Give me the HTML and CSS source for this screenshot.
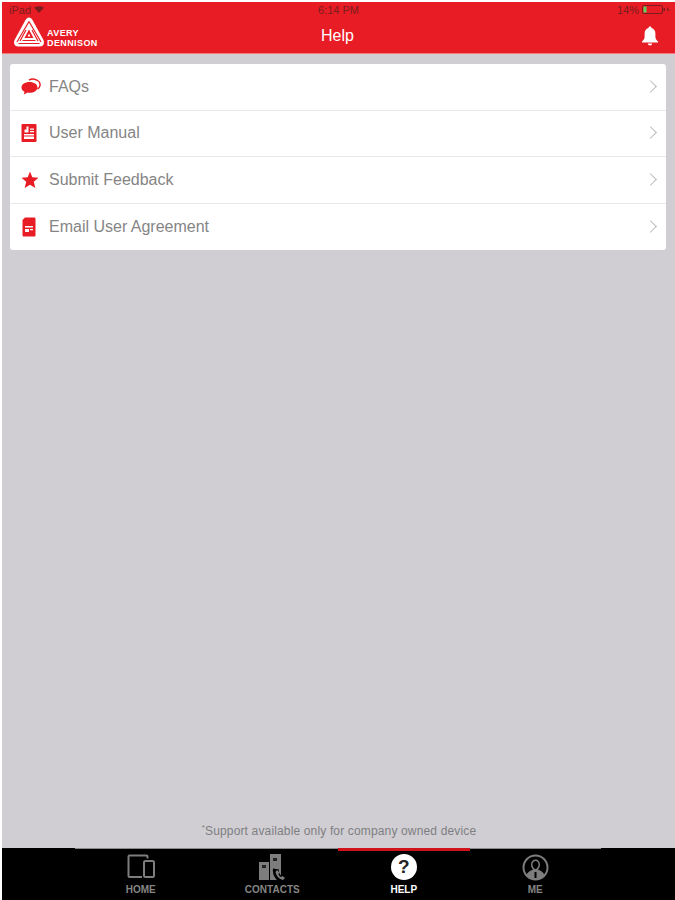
FILE: index.html
```html
<!DOCTYPE html>
<html lang="en">
<head>
    <meta charset="UTF-8">
    <meta name="viewport" content="width=device-width, initial-scale=1.0">
    <title>Help</title>
    <link rel="stylesheet" href="styles.css">
</head>
<body>
    <div class="app">
        <header class="header">
            <div class="status">
                <span class="status-left">iPad
                    <svg class="wifi" width="10" height="7" viewBox="0 0 10 7"><path d="M0 1.500Q5-1 10 1.500L5 7Z"/></svg>
                </span>
                <span class="status-time">6:14 PM</span>
                <span class="status-right">14%
                    <svg class="battery" width="28" height="9" viewBox="0 0 28 9">
                        <rect x="0.500" y="0.500" width="20" height="8" rx="1.500" fill="none" stroke="#7a1c20"/>
                        <rect x="1.500" y="1.500" width="3" height="6" fill="#5fd35f"/>
                        <rect x="21.500" y="3" width="1.500" height="3" fill="#7a1c20"/>
                        <path d="M26.500 1.500L24.500 5H26L25.500 7.500L27.500 4H26Z" fill="#7a1c20"/>
                    </svg>
                </span>
            </div>
            <div class="nav">
                <div class="logo">
                    <svg width="32" height="31" viewBox="0 0 32 31">
                        <path d="M16 .5C14.500 .5 13.500 1.500 12.500 3L1.800 22.500C0 26 1.500 29.500 5 29.500H27C30.500 29.500 32 26 30.200 22.500L19.500 3C18.500 1.500 17.500 .5 16 .5Z" fill="#fff"/>
                        <path d="M16 4.500L4 25M13 13L7 24M16 4.500L28 25M19 13L25 24M5.500 26.500H26.500M9.500 23.500H22.500" fill="none" stroke="#e81c24" stroke-width="1.200"/>
                        <path d="M16 12.500L11.500 21H20.500Z" fill="#e81c24"/>
                        <path d="M16 16.500L14.500 19.500H17.500Z" fill="#fff"/>
                    </svg>
                    <div class="logo-text">AVERY<br>DENNISON</div>
                </div>
                <div class="title">Help</div>
                <svg class="bell" width="18" height="20" viewBox="0 0 18 20">
                    <path d="M9 0.500C8 0.500 7.500 1.200 7.500 2C5 2.800 3.600 4.800 3.600 7.500V11C3.600 13 2.400 14.200 1 15.500V16.500H17V15.500C15.600 14.200 14.400 13 14.400 11V7.500C14.400 4.800 13 2.800 10.500 2C10.500 1.200 10 0.500 9 0.500Z" fill="#fff"/>
                    <path d="M6.800 17.500H11.200C11 18.800 10.100 19.500 9 19.500S7 18.800 6.800 17.500Z" fill="#fff"/>
                </svg>
            </div>
        </header>

        <main class="main">
            <ul class="menu">
                <li class="menu-row">
                    <svg class="menu-icon" width="20" height="18" viewBox="0 0 20 18">
                        <path d="M8.500 4C4 4 .5 6.300 .5 9.400C.5 11.200 1.700 12.700 3.500 13.700L2.800 16.500L6.600 14.600C7.200 14.700 7.800 14.800 8.500 14.800C13 14.800 16.500 12.400 16.500 9.400C16.500 6.300 13 4 8.500 4Z" fill="#e81c24"/>
                        <path d="M8 2.200C9.500 1.200 11.500 .8 13.500 1.200C17 1.900 19.500 4.500 19 7.500C18.800 9 17.800 10.200 16.500 11" fill="none" stroke="#e81c24" stroke-width="1.500"/>
                    </svg>
                    <span class="menu-label">FAQs</span>
                    <span class="chevron"></span>
                </li>
                <li class="menu-row">
                    <svg class="menu-icon" width="16" height="19" viewBox="0 0 16 19">
                        <rect x="0.500" y="0.500" width="15" height="18" rx="1" fill="#e81c24"/>
                        <path d="M5.500 3H7.500V9H5.500ZM3.500 6H5.500V9H3.500ZM9 5H13V6.200H9ZM9 7.500H13V8.700H9ZM3 10.500H13V12H3ZM3 13H13V15.500H3Z" fill="#fff"/>
                    </svg>
                    <span class="menu-label">User Manual</span>
                    <span class="chevron"></span>
                </li>
                <li class="menu-row">
                    <svg class="menu-icon" width="18" height="17" viewBox="0 0 18 17">
                        <path d="M9 0L11.300 5.800L17.500 6.300L12.800 10.300L14.300 16.500L9 13.200L3.700 16.500L5.200 10.300L.5 6.300L6.700 5.800Z" fill="#e81c24"/>
                    </svg>
                    <span class="menu-label">Submit Feedback</span>
                    <span class="chevron"></span>
                </li>
                <li class="menu-row">
                    <svg class="menu-icon" width="16" height="20" viewBox="0 0 16 20">
                        <path d="M4 .5H13C14 .5 14.500 1 14.500 2V18C14.500 19 14 19.500 13 19.500H3C2 19.500 1.500 19 1.500 18V3Z" fill="#e81c24"/>
                        <path d="M4 9H12V10.500H4ZM4 12H8V15H4ZM9 12H12V13.200H9Z" fill="#fff"/>
                    </svg>
                    <span class="menu-label">Email User Agreement</span>
                    <span class="chevron"></span>
                </li>
            </ul>
            <p class="note"><sup>*</sup>Support available only for company owned device</p>
        </main>

        <nav class="tabbar">
            <div class="tabs">
                <div class="tab">
                    <svg width="28" height="25" viewBox="0 0 28 25" fill="none" stroke="#7d7d7d" stroke-width="2">
                        <path d="M20.500 4.500V2.500C20.500 1.800 20 1.500 19.500 1.500H2.500C1.800 1.500 1.500 1.800 1.500 2.500V22C1.500 22.700 1.800 23 2.500 23H15"/>
                        <rect x="17" y="7" width="10" height="16" rx="1.500"/>
                    </svg>
                    <span>HOME</span>
                </div>
                <div class="tab">
                    <svg width="28" height="27" viewBox="0 0 28 27">
                        <rect x="1" y="8" width="10" height="18" fill="#7d7d7d"/>
                        <rect x="12" y="0" width="11" height="26" fill="#7d7d7d"/>
                        <path d="M4 11H8V14H4ZM15 4H19V7H15Z" fill="#222"/>
                        <path d="M18 15C17 20 21 26 27 27" fill="none" stroke="#000" stroke-width="6"/>
                        <path d="M19 16L17.500 18C18 21.500 21 25 25 26L27 24L24.500 22L23 23C21.500 22.500 20.500 21 20.500 19.500L21.500 18.500Z" fill="#7d7d7d"/>
                    </svg>
                    <span>CONTACTS</span>
                </div>
                <div class="tab tab-active">
                    <div class="help-icon">?</div>
                    <span>HELP</span>
                </div>
                <div class="tab">
                    <svg width="27" height="27" viewBox="0 0 27 27">
                        <circle cx="13.500" cy="13.500" r="12" fill="none" stroke="#7d7d7d" stroke-width="2"/>
                        <path d="M4.500 21C6 17.500 9 16.500 11 15.500C9.500 14 9 12 9 10.500C9 7.500 11 5.500 13.500 5.500S18 7.500 18 10.500C18 12 17.500 14 16 15.500C18 16.500 21 17.500 22.500 21C20.500 24 17 25.500 13.500 25.500S6.500 24 4.500 21Z" fill="#7d7d7d"/>
                        <path d="M10.500 10.500C10.500 8.500 11.800 7 13.500 7S16.500 8.500 16.500 10.500C16.500 12.500 15 15 13.500 15S10.500 12.500 10.500 10.500Z" fill="#000"/>
                        <rect x="12.500" y="18" width="2" height="6" fill="#000"/>
                    </svg>
                    <span>ME</span>
                </div>
            </div>
        </nav>
    </div>
</body>
</html>
```

FILE: styles.css
```css
* { box-sizing: border-box; }
html, body { margin: 0; padding: 0; }
body { font-family: "Liberation Sans", Arial, sans-serif; background: #fff; }
.app { height: 900px; padding: 2px 0 0 2px; display: flex; flex-direction: column; overflow: hidden; }

.header { height: 52px; background: #e81c24; border-bottom: 1px solid #f4797d; flex: none; }
.status { height: 15px; padding: 0 5px 0 7px; display: flex; align-items: center; justify-content: space-between; position: relative; font-size: 11px; color: #7a1c20; }
.status-left, .status-right { display: flex; align-items: center; gap: 3px; }
.status-time { position: absolute; left: 0; right: 0; text-align: center; }
.wifi { fill: #7a1c20; }
.nav { height: 35px; padding: 0 16px 0 11px; display: flex; align-items: center; justify-content: space-between; position: relative; }
.logo { display: flex; align-items: center; gap: 2px; margin-top: -4px; }
.logo-text { font-size: 9px; line-height: 10px; font-weight: bold; color: #fff; margin-top: 10px; letter-spacing: 0.4px; }
.title { position: absolute; left: 0; right: 2px; top: 1px; line-height: 35px; text-align: center; font-size: 16px; color: #fff; }
.bell { margin-top: 2px; }

.main { flex: 1; display: flex; flex-direction: column; justify-content: space-between; background: #d0ced2; padding: 10px 9px 0 8px; }
.menu { list-style: none; margin: 0; padding: 0; background: #fff; border-radius: 3px; }
.menu-row { height: 46.5px; padding-left: 11px; display: flex; align-items: center; position: relative; border-bottom: 1px solid #e8e8ea; }
.menu-row:last-child { border-bottom: none; }
.menu-icon { position: absolute; left: 11px; top: 50%; transform: translateY(-50%); }
.menu-label { margin-left: 28px; font-size: 16px; color: #858585; }
.chevron { position: absolute; right: 11px; top: 50%; width: 9px; height: 9px; margin-top: -5px; border-top: 1.5px solid #b9b9bc; border-right: 1.5px solid #b9b9bc; transform: rotate(45deg); }
.note { margin: 0 0 10px; text-align: center; font-size: 12px; letter-spacing: 0.15px; color: #7e7e82; padding-left: 2px; }
.note sup { font-size: 8px; line-height: 0; }

.tabbar { height: 52px; background: #000; flex: none; padding-left: 73px; }
.tabs { width: 526px; display: flex; border-top: 1px solid #8a8a8c; }
.tab { width: 131.5px; height: 52px; margin-top: -1px; padding-top: 6px; position: relative; display: flex; flex-direction: column; align-items: center; color: #858585; font-size: 10px; font-weight: bold; }
.tab svg { flex: none; }
.tab span { position: absolute; top: 36px; }
.tab-active { color: #fff; border-top: 3px solid #d0121b; padding-top: 3px; }
.tab-active span { top: 33px; }
.help-icon { flex: none; width: 26px; height: 26px; border-radius: 50%; background: #fff; color: #222; font-size: 19px; font-weight: bold; line-height: 26px; text-align: center; }
```
